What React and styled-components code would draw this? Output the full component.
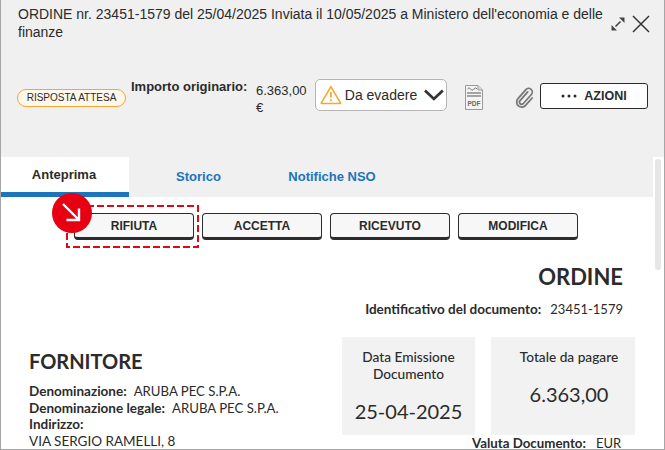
import React from "react";
import styled, { createGlobalStyle } from "styled-components";

const GlobalStyle = createGlobalStyle`
  html, body {
    margin: 0;
    padding: 0;
    background: #ffffff;
  }
`;

function ExpandIcon() {
  return (
    <svg width="16" height="16" viewBox="0 0 16 16">
      <path d="M5.5 10.5 L10.5 5.5" stroke="#444" strokeWidth="1.6" />
      <path d="M9 1.5 H14.5 V7 Z" fill="#444" />
      <path d="M1.5 9 V14.5 H7 Z" fill="#444" />
    </svg>
  );
}

function CloseIcon() {
  return (
    <svg width="18" height="18" viewBox="0 0 18 18">
      <path d="M1 1 L17 17 M17 1 L1 17" stroke="#333" strokeWidth="1.5" />
    </svg>
  );
}

function WarningIcon() {
  return (
    <svg width="22" height="20" viewBox="0 0 22 20">
      <path
        d="M11 1.6 L20.6 18 a0.4 0.4 0 0 1 -0.3 0.6 H1.7 a0.4 0.4 0 0 1 -0.3 -0.6 Z"
        fill="none"
        stroke="#f5a733"
        strokeWidth="1.6"
        strokeLinejoin="round"
      />
      <path d="M11 7 V12.5" stroke="#f5a733" strokeWidth="1.8" />
      <circle cx="11" cy="15.3" r="1.1" fill="#f5a733" />
    </svg>
  );
}

function ChevronIcon() {
  return (
    <svg width="20" height="12" viewBox="0 0 20 12">
      <path d="M1 1.5 L10 10 L19 1.5" fill="none" stroke="#333" strokeWidth="2.8" />
    </svg>
  );
}

function PdfIcon() {
  return (
    <svg width="18" height="25" viewBox="0 0 18 25">
      <path d="M0.5 0.5 H13 L17.5 5 V24.5 H0.5 Z" fill="#f4f4f4" stroke="#9a9a9a" />
      <path d="M13 0.5 V5 H17.5" fill="#dcdcdc" stroke="#9a9a9a" />
      <path d="M2.5 4 Q4 1.5 5.5 4 T9 4 T12 4" fill="none" stroke="#777" />
      <path d="M2 8 H16 M2 11 H16" stroke="#555" strokeWidth="1.2" />
      <text x="9" y="20.5" fontFamily="Liberation Sans, sans-serif" fontSize="6.5" fontWeight="700" fill="#666" textAnchor="middle">
        PDF
      </text>
    </svg>
  );
}

function ClipIcon() {
  return (
    <svg width="20" height="22" viewBox="0 0 18 20">
      <path
        d="M11.5 4.5 L4.3 12.6 a2 2 0 0 0 3 2.6 L14.8 6.8 a3.3 3.3 0 0 0 -5 -4.4 L2.6 10.6 a4.6 4.6 0 0 0 6.9 6.1 L15.5 10"
        fill="none"
        stroke="#777"
        strokeWidth="1.6"
        strokeLinecap="round"
      />
    </svg>
  );
}

function DotsIcon() {
  return (
    <svg width="16" height="4" viewBox="0 0 16 4">
      <circle cx="2" cy="2" r="1.5" fill="#2b2b2b" />
      <circle cx="8" cy="2" r="1.5" fill="#2b2b2b" />
      <circle cx="14" cy="2" r="1.5" fill="#2b2b2b" />
    </svg>
  );
}

function ArrowIcon() {
  return (
    <svg width="26" height="26" viewBox="0 0 26 26">
      <path d="M4 4 L20 20 M20 8.5 V20 H7.5" fill="none" stroke="#fff" strokeWidth="2.4" />
    </svg>
  );
}

function DashedFrame() {
  return (
    <svg width="133" height="43" viewBox="0 0 133 43">
      <rect x="1" y="1" width="131" height="41" fill="none" stroke="#e30613" strokeWidth="2" strokeDasharray="7 3" />
    </svg>
  );
}

export default function App() {
  const tabs = ["Anteprima", "Storico", "Notifiche NSO"];
  const actions = ["RIFIUTA", "ACCETTA", "RICEVUTO", "MODIFICA"];

  return (
    <>
      <GlobalStyle />
      <Window>
        <Header>
          <TitleRow>
            <Title>
              ORDINE nr. 23451-1579 del 25/04/2025 Inviata il 10/05/2025 a Ministero dell'economia e delle finanze
            </Title>
            <WindowIcons>
              <ExpandIcon />
              <CloseIcon />
            </WindowIcons>
          </TitleRow>
          <MetaRow>
            <StatusPill>RISPOSTA ATTESA</StatusPill>
            <AmountLabel>Importo originario:</AmountLabel>
            <AmountValue>6.363,00 €</AmountValue>
            <StateSelect>
              <WarningIcon />
              <StateText>Da evadere</StateText>
              <ChevronIcon />
            </StateSelect>
            <PdfSlot>
              <PdfIcon />
            </PdfSlot>
            <ClipSlot>
              <ClipIcon />
            </ClipSlot>
            <ActionsButton>
              <DotsIcon />
              AZIONI
            </ActionsButton>
          </MetaRow>
          <Tabs>
            {tabs.map((tab, i) => (
              <Tab key={tab} $active={i === 0} $width={[128, 139, 128][i]}>
                {tab}
              </Tab>
            ))}
          </Tabs>
        </Header>
        <Body>
          <Toolbar>
            {actions.map((action, i) => (
              <ToolButton key={action}>
                {action}
                {i === 0 && (
                  <>
                    <DashedMark>
                      <DashedFrame />
                    </DashedMark>
                    <RedBadge>
                      <ArrowIcon />
                    </RedBadge>
                  </>
                )}
              </ToolButton>
            ))}
          </Toolbar>
          <DocHead>
            <DocTitle>ORDINE</DocTitle>
            <DocId>
              <b>Identificativo del documento:</b>
              <span>23451-1579</span>
            </DocId>
          </DocHead>
          <Columns>
            <Supplier>
              <SupplierTitle>FORNITORE</SupplierTitle>
              <Line>
                <b>Denominazione:</b>
                <span>ARUBA PEC S.P.A.</span>
              </Line>
              <Line>
                <b>Denominazione legale:</b>
                <span>ARUBA PEC S.P.A.</span>
              </Line>
              <Line>
                <b>Indirizzo:</b>
              </Line>
              <Line>VIA SERGIO RAMELLI, 8</Line>
            </Supplier>
            <Summary>
              <Cards>
                <DateCard>
                  <CardLabel>
                    Data Emissione
                    <br />
                    Documento
                  </CardLabel>
                  <CardValue>25-04-2025</CardValue>
                </DateCard>
                <TotalCard>
                  <CardLabel>Totale da pagare</CardLabel>
                  <CardValue>6.363,00</CardValue>
                </TotalCard>
              </Cards>
              <Currency>
                <b>Valuta Documento:</b>
                <span>EUR</span>
              </Currency>
            </Summary>
          </Columns>
          <ScrollTrack>
            <ScrollThumb />
          </ScrollTrack>
        </Body>
      </Window>
    </>
  );
}

const Window = styled.div`
  width: 665px;
  height: 450px;
  box-sizing: border-box;
  border: 1px solid #a6a6a6;
  border-top: none;
  position: relative;
  overflow: hidden;
  background: #ffffff;
  color: #2b2b2b;
  font-family: "Liberation Sans", Arial, sans-serif;
`;

const Header = styled.div`
  background: #f0f0f0;
  height: 197px;
  display: flex;
  flex-direction: column;
`;

const TitleRow = styled.div`
  display: flex;
  align-items: flex-start;
  padding: 5px 14px 0 17px;
  height: 70px;
  box-sizing: border-box;
`;

const Title = styled.div`
  width: 590px;
  font-size: 14px;
  line-height: 18px;
`;

const WindowIcons = styled.div`
  margin-left: auto;
  display: flex;
  align-items: center;
  gap: 6px;
  padding-top: 10px;
`;

const MetaRow = styled.div`
  height: 87px;
  box-sizing: border-box;
  display: flex;
  align-items: flex-start;
  padding: 9px 0 0 16px;
`;

const StatusPill = styled.div`
  margin-top: 10px;
  width: 109px;
  height: 18px;
  box-sizing: border-box;
  border: 1px solid #f5a733;
  border-radius: 9px;
  background: #fff7ea;
  font-size: 10px;
  line-height: 16px;
  text-align: center;
  white-space: nowrap;
`;

const AmountLabel = styled.div`
  margin-left: 5px;
  font-size: 13px;
  font-weight: 700;
  line-height: 15px;
  white-space: nowrap;
  width: 125px;
`;

const AmountValue = styled.div`
  width: 52px;
  font-size: 13px;
  line-height: 17px;
  margin-top: 3px;
`;

const StateSelect = styled.div`
  width: 132px;
  height: 32px;
  box-sizing: border-box;
  margin-left: 7px;
  border: 1px solid #b5b5b5;
  border-radius: 5px;
  background: #ffffff;
  display: flex;
  align-items: center;
  padding: 0 2px 0 4px;
  gap: 3px;
`;

const StateText = styled.span`
  font-size: 14px;
  margin-right: 4px;
  white-space: nowrap;
`;

const PdfSlot = styled.div`
  margin-left: 18px;
  margin-top: 6px;
  width: 18px;
`;

const ClipSlot = styled.div`
  margin-left: 32px;
  margin-top: 8px;
  width: 20px;
`;

const ActionsButton = styled.div`
  margin-left: 5px;
  margin-top: 4px;
  width: 108px;
  height: 26px;
  box-sizing: border-box;
  border: 1px solid #2b2b2b;
  border-radius: 3px;
  background: #ffffff;
  display: flex;
  align-items: center;
  justify-content: center;
  gap: 7px;
  font-size: 12.5px;
  font-weight: 700;
`;

const Tabs = styled.div`
  display: flex;
  height: 40px;
`;

const Tab = styled.div`
  width: ${(p) => p.$width}px;
  height: 40px;
  box-sizing: border-box;
  padding: ${(p) => (p.$active ? "10px 2px 0 0" : "12px 0 0")};
  text-align: center;
  font-size: 13px;
  font-weight: 700;
  line-height: 15px;
  color: ${(p) => (p.$active ? "#2b2b2b" : "#1a75bc")};
  background: ${(p) => (p.$active ? "#ffffff" : "transparent")};
  border-bottom: ${(p) => (p.$active ? "5px solid #1a75bc" : "none")};
`;

const Body = styled.div`
  position: relative;
  height: 252px;
  font-family: Lato, sans-serif;
`;

const Toolbar = styled.div`
  display: flex;
  gap: 8px;
  padding: 16px 0 0 73px;
`;

const ToolButton = styled.div`
  position: relative;
  width: 120px;
  height: 27px;
  box-sizing: border-box;
  border: 1px solid #2b2b2b;
  border-bottom-width: 3px;
  border-radius: 4px;
  background: #f7f7f7;
  font-family: "Liberation Sans", Arial, sans-serif;
  font-size: 12px;
  font-weight: 700;
  line-height: 25px;
  text-align: center;
`;

const DashedMark = styled.div`
  position: absolute;
  left: -9px;
  top: -9px;
  width: 133px;
  height: 43px;
  line-height: 0;
`;

const RedBadge = styled.div`
  position: absolute;
  left: -23px;
  top: -21px;
  width: 40px;
  height: 40px;
  border-radius: 50%;
  background: #e60012;
  display: flex;
  align-items: center;
  justify-content: center;
`;

const DocHead = styled.div`
  padding: 24px 41px 0 0;
  text-align: right;
`;

const DocTitle = styled.div`
  font-size: 22px;
  font-weight: 700;
  line-height: 26px;
`;

const DocId = styled.div`
  margin-top: 11px;
  font-size: 13px;
  line-height: 16px;

  b {
    font-size: 13.5px;
  }

  span {
    margin-left: 9px;
  }
`;

const Columns = styled.div`
  display: flex;
  padding: 20px 0 0 28px;
`;

const Supplier = styled.div`
  width: 313px;
  padding-top: 12px;
`;

const SupplierTitle = styled.div`
  font-size: 20px;
  font-weight: 700;
  line-height: 24px;
  margin-bottom: 10px;
`;

const Line = styled.div`
  font-size: 13.5px;
  line-height: 16.6px;
  white-space: nowrap;

  span {
    margin-left: 7px;
    font-size: 13.2px;
  }
`;

const Summary = styled.div`
  display: flex;
  flex-direction: column;
`;

const Cards = styled.div`
  display: flex;
  gap: 16px;
`;

const Card = styled.div`
  height: 98px;
  background: #f2f2f2;
  box-sizing: border-box;
  text-align: center;
  padding-top: 11px;
`;

const DateCard = styled(Card)`
  width: 133px;
`;

const TotalCard = styled(Card)`
  width: 144px;
  padding-left: 12px;
`;

const CardLabel = styled.div`
  font-size: 13.7px;
  font-weight: 500;
  line-height: 17px;
`;

const CardValue = styled.div`
  margin-top: 16px;
  font-size: 20px;
  line-height: 26px;
`;

const Currency = styled.div`
  margin: 0 0 0 130px;
  font-size: 13px;
  line-height: 16px;
  white-space: nowrap;

  b {
    font-size: 13.3px;
  }

  span {
    margin-left: 10px;
  }
`;

const ScrollTrack = styled.div`
  position: absolute;
  right: 0;
  top: -40px;
  width: 11px;
  height: 292px;
  background: #ffffff;
  padding-top: 2px;
  box-sizing: border-box;
`;

const ScrollThumb = styled.div`
  width: 6px;
  margin-left: 2px;
  height: 111px;
  border-radius: 3px;
  background: #e6e6e6;
`;
